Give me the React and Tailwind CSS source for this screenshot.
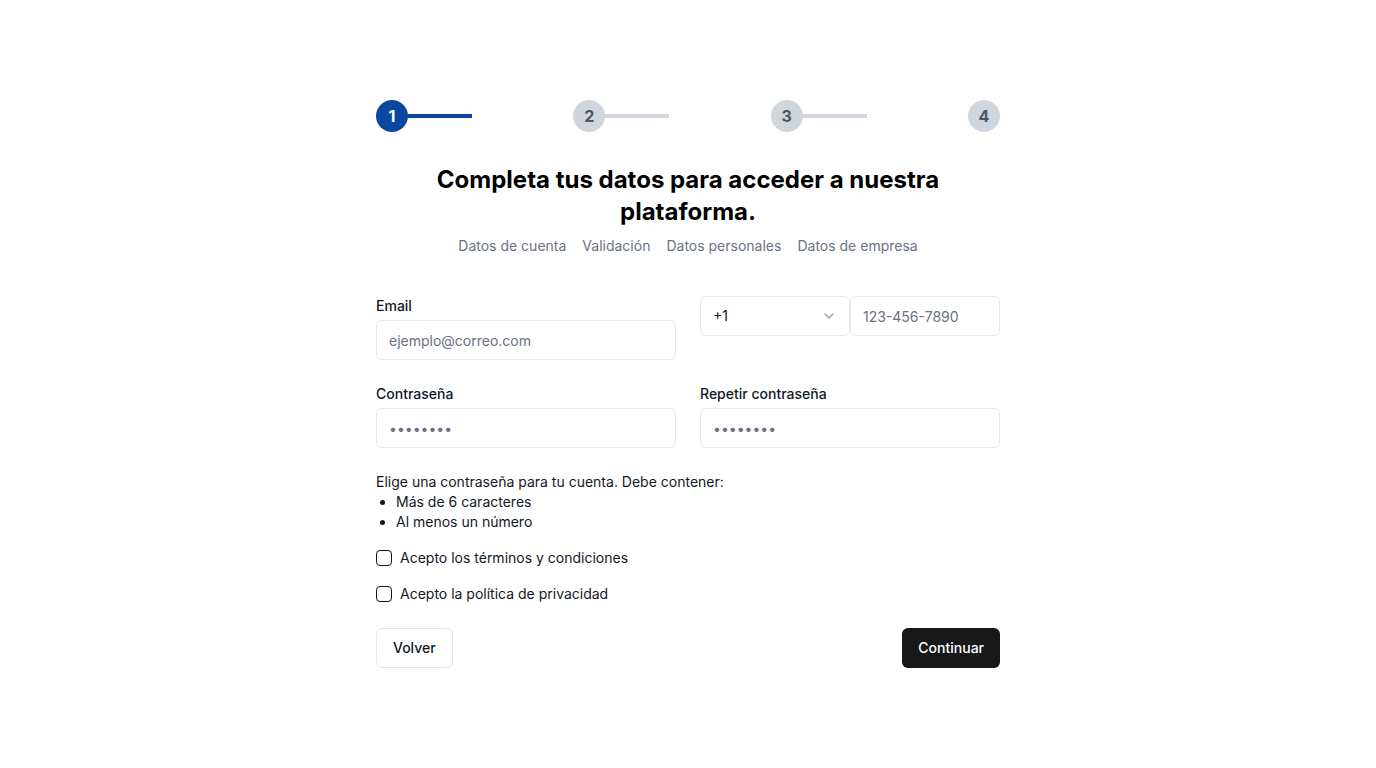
import { ChevronDown } from 'lucide-react';

const steps = [1, 2, 3, 4];

const Stepper = () => (
    <div className="flex items-center justify-between">
        {steps.map((n, i) => (
            <div key={n} className="flex items-center">
                <div
                    className={`w-8 h-8 rounded-full flex items-center justify-center text-base font-bold ${n === 1 ? 'bg-[#0a47a1] text-white' : 'bg-gray-300 text-gray-600'}`}
                >
                    {n}
                </div>
                {i < steps.length - 1 && (
                    <div className={`w-16 h-1 ${n === 1 ? 'bg-[#0a47a1]' : 'bg-gray-300'}`} />
                )}
            </div>
        ))}
    </div>
);

const Input = ({ placeholder, type = 'text', className = '' }) => (
    <input
        type={type}
        placeholder={placeholder}
        className={`h-10 w-full rounded-md border border-gray-200 bg-white px-3 text-sm text-gray-900 placeholder:text-gray-500 outline-none ${className}`}
    />
);

const Check = ({ label }) => (
    <label className="flex items-center gap-2 text-sm text-gray-900">
        <span className="w-4 h-4 rounded-[4px] border border-gray-900 bg-white" />
        {label}
    </label>
);

export default function App() {
    return (
        <div className="min-h-screen bg-white font-['Inter',sans-serif] text-gray-900">
            <div className="mx-auto w-[624px] pt-[100px]">
                <Stepper />

                <div className="mt-8 text-center">
                    <h1 className="mx-auto max-w-[512px] text-2xl font-bold leading-8 text-black">
                        Completa tus datos para acceder a nuestra plataforma.
                    </h1>
                    <div className="mt-2 flex justify-center gap-4 text-sm text-gray-500">
                        <span>Datos de cuenta</span>
                        <span>Validación</span>
                        <span>Datos personales</span>
                        <span>Datos de empresa</span>
                    </div>
                </div>

                <div className="mt-10 grid grid-cols-2 gap-x-6 gap-y-6">
                    <div>
                        <label className="block text-sm font-medium mb-1">Email</label>
                        <Input placeholder="ejemplo@correo.com" />
                    </div>
                    <div className="flex items-start">
                        <div className="h-10 w-[150px] rounded-md border border-gray-200 flex items-center justify-between px-3 text-sm text-gray-900">
                            <span>+1</span>
                            <ChevronDown size={16} className="text-gray-400" />
                        </div>
                        <Input placeholder="123-456-7890" className="!w-[150px]" />
                    </div>
                    <div>
                        <label className="block text-sm font-medium mb-1">Contraseña</label>
                        <Input type="password" placeholder="••••••••" />
                    </div>
                    <div>
                        <label className="block text-sm font-medium mb-1">Repetir contraseña</label>
                        <Input type="password" placeholder="••••••••" />
                    </div>
                </div>

                <div className="mt-6 text-sm leading-5">
                    <p>Elige una contraseña para tu cuenta. Debe contener:</p>
                    <ul className="list-disc pl-5">
                        <li>Más de 6 caracteres</li>
                        <li>Al menos un número</li>
                    </ul>
                </div>

                <div className="mt-4 flex flex-col gap-4">
                    <Check label="Acepto los términos y condiciones" />
                    <Check label="Acepto la política de privacidad" />
                </div>

                <div className="mt-6 flex justify-between">
                    <button className="h-10 px-4 rounded-md border border-gray-200 bg-white text-sm font-medium">
                        Volver
                    </button>
                    <button className="h-10 px-4 rounded-md bg-[#18181b] text-white text-sm font-medium">
                        Continuar
                    </button>
                </div>
            </div>
        </div>
    );
}
